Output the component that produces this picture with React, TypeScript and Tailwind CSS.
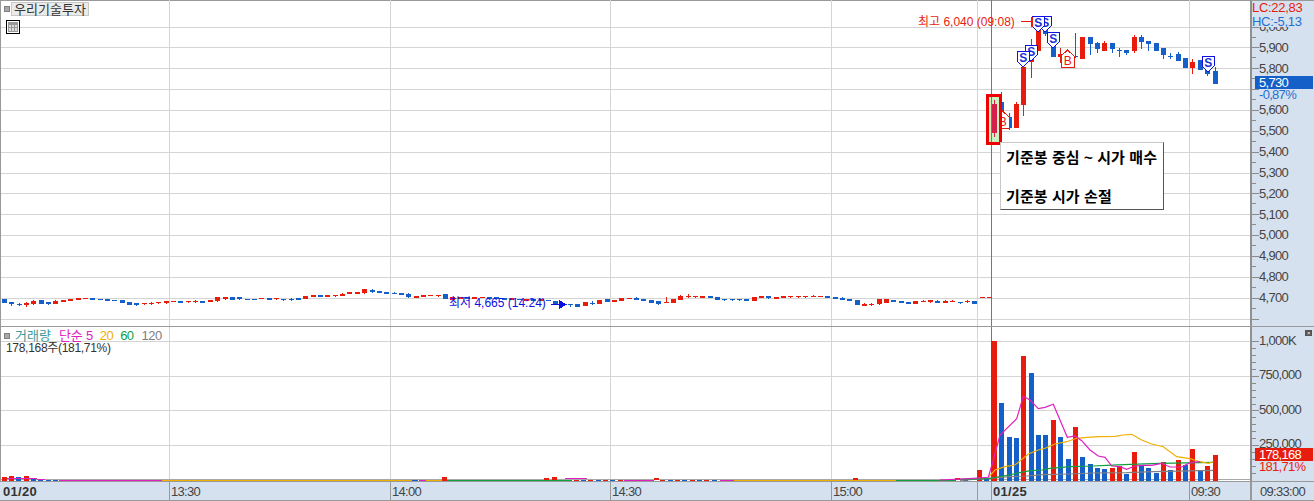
import React from "react";

type C = [string, number, number, number?, number?];
const R = "#e81c0c";
const B = "#1560c8";

const left: C[] = [
  ["b",299,303],["b",302,304,302,306],["b",304,305,303,306],["r",303,305,302,307],["r",301,304,300,305],["b",300,304],["b",302,304,302,305],["r",301,304,300,304],
  ["r",300,302],["r",299,301],["r",298,300],["r",298,299],["b",298,300],["b",299,300],["b",299,301],["b",300,301],
  ["b",300,303],["b",302,305],["b",303,305,303,306],["r",303,304,303,305],["r",303,304,302,305],["r",302,303,302,304],["r",301,303,301,304],["r",301,302],
  ["b",301,303],["r",301,302,301,303],["r",301,302,300,303],["b",301,303],["r",300,302],["r",297,301,297,302],["r",297,299,297,300],["b",297,300],
  ["b",297,299,297,300],["b",299,300],["b",299,300],["r",298,299],["b",298,300],["r",298,299,298,300],["b",299,300,299,301],["b",299,300,298,301],
  ["b",298,300],["r",296,299],["r",295,297],["b",295,297],["r",295,297],
  ["r",295,296,295,297],["r",294,296,293,296],["r",292,294],["r",292,294],["r",289,293,289,294],["b",290,292,289,293],["b",291,293],["b",292,294],
  ["b",293,294,292,294],["b",293,295],["b",294,297,293,298],["r",296,298],["r",295,297],["r",295,296],["r",295,296,295,297],["b",294,299],
  ["r",297,300],["r",297,299],["b",297,299],["r",297,299],["r",297,298],["b",297,299],["b",297,299],["b",298,300],
  ["r",298,300],["b",299,300],["r",299,301],["b",299,301],["r",299,301],["b",300,301],["b",301,304],["b",304,305,303,306],
  ["b",304,305,304,307],["b",304,307],["r",302,306],["b",303,304,301,305],["r",300,304],["b",299,302],["r",300,302],["r",298,301],
  ["r",298,299],["b",298,300,297,300],["b",299,301],["b",300,303],["b",301,304,301,305],
  ["r",302,303,297,303],["r",299,303],["r",296,300,295,300],["r",296,297,294,298],["r",296,297,296,298],["r",296,298],["b",296,298],["b",297,300],
  ["b",299,300,299,301],["b",299,300,299,301],["b",299,300,299,301],["b",299,301],["r",297,301],["r",296,298],["b",296,298,296,299],["r",297,299],
  ["r",296,298],["r",296,297,296,298],["r",296,297,296,298],["r",296,297,296,298],["r",296,297,295,297],["r",296,297],["b",296,298],["b",297,299],
  ["b",298,300,297,300],["b",299,301],["b",300,305],["r",304,306,303,306],["r",304,305,303,306],["r",299,304,299,305],["r",299,303],["b",300,302],
  ["b",301,303],["b",302,304],["r",301,304],["r",301,302,300,302],["r",300,302,300,303],["b",301,303,300,303],["r",301,303,300,303],["r",301,302,300,302],
  ["b",302,303,302,304],["r",301,302,300,303],["b",301,304],["r",297,298],["r",297,298],
];

const right: C[] = [
  ["c",104,133,100,137],["b",102,118,92,120],["b",117,128,113,130],["r",104,128,102,128],["r",67,105,60,116],["r",47,62,39,78],["r",30,51,22,51],["b",16,34,16,36],
  ["b",45,57,32,57],["r",54,57,48,63],["r",58,62,58,66],["b",56,57,33,58],["r",37,59],["b",37,44,37,55],["b",43,49,42,53],["r",43,51,41,51],
  ["b",43,49,43,53],["b",50,51,48,57],["b",50,53,50,55],["r",37,51,35,53],["b",37,42,35,49],["b",41,44,41,51],["b",43,51],["b",48,55,48,59],
  ["b",56,57,53,59],["b",54,61,52,61],["b",58,68],["r",62,68,59,74],["b",60,70],["b",66,74,66,76],["b",71,84,67,84],
];

const vol: [string, number][] = [
  ["r",341],["b",403],["b",437],["b",438],["r",356],["b",373],["b",435],["b",435],["r",420],["b",437],["b",459],["r",427],["b",457],["b",464],["b",468],["b",469],
  ["r",468],["r",466],["b",474],["r",452],["b",465],["b",468],["b",473],["r",462],["b",470],["r",460],["b",465],["r",449],["b",470],["r",466],["r",455],
];

const toLine = (pts: number[][]) => pts.map(([x, y]) => `${(960 + x / 3).toFixed(1)},${(320 + y / 3).toFixed(1)}`).join(" ");
const magenta = toLine([[-60,480],[40,475],[85,472],[100,420],[120,345],[170,296],[190,229],[210,240],[235,266],[255,262],[280,253],[300,300],[322,352],[345,348],[365,362],[390,390],[415,408],[435,412],[455,438],[480,440],[500,448],[525,438],[550,436],[575,436],[605,430],[630,441],[665,441],[690,428],[720,425]]);
const orange = toLine([[85,472],[105,450],[135,440],[165,435],[205,402],[235,390],[255,385],[285,372],[320,365],[350,355],[380,352],[420,350],[465,349],[490,345],[515,343],[545,360],[575,372],[610,380],[650,410],[690,416],[720,425],[745,430],[760,425]]);
const green = toLine([[0,478],[85,476],[130,468],[180,458],[210,452],[245,450],[270,445],[330,440],[400,438],[440,436],[510,433],[600,430],[760,427]]);
const gray = toLine([[0,481],[100,474],[150,470],[200,468],[250,464],[330,462],[400,459],[500,458],[580,455],[760,451]]);

const colX = (i: number) => Math.round(992 + 7.35 * i);
const verticals = [169, 390, 610, 831, 977, 1189];
const prices = ["6,000","5,900","5,800","","5,600","5,500","5,400","5,300","5,200","5,100","5,000","4,900","4,800","4,700"];
const priceY = Array.from({ length: 15 }, (_, i) => Math.round(26.6 + 20.85 * i));

function Candle({ x, c }: { x: number; c: C }) {
  const [k, t, b, wt, wb] = c;
  const fill = k === "r" ? R : k === "b" ? B : "#d81e4a";
  return (
    <g>
      {(wt !== undefined || wb !== undefined) && (
        <rect x={x + 2} y={wt ?? t} width={1} height={(wb ?? b) - (wt ?? t)} fill={fill} />
      )}
      <rect x={x} y={t} width={5} height={b - t} fill={fill} />
    </g>
  );
}

function SMark({ x, y }: { x: number; y: number }) {
  return (
    <g>
      <polygon points={`${x},${y} ${x + 12},${y} ${x + 12},${y + 10} ${x + 6},${y + 16} ${x},${y + 10}`} fill="#fff" stroke="#1010e0" strokeWidth={1} />
      <text x={x + 6} y={y + 11} textAnchor="middle" fontSize={12} fontWeight={700} fill="#1a30d8">S</text>
    </g>
  );
}

function BMark({ x, y }: { x: number; y: number }) {
  return (
    <g>
      <polygon points={`${x + 6.5},${y} ${x + 13},${y + 6} ${x + 13},${y + 17} ${x},${y + 17} ${x},${y + 6}`} fill="#fff" stroke={R} strokeWidth={1} />
      <text x={x + 6.5} y={y + 15} textAnchor="middle" fontSize={12} fontWeight={400} fill={R}>B</text>
    </g>
  );
}

const Sq = () => <span className="block w-[6px] h-[6px] bg-[#a8a8a8] border border-[#808080]" />;

export default function App() {
  return (
    <div className="w-[1314px] h-[501px] flex flex-col bg-[#d6e1ef] overflow-hidden font-['Liberation_Sans','Noto_Sans_CJK_KR',sans-serif] text-[13px] leading-none tracking-[-0.7px] text-[#444]">
      {/* price pane */}
      <div className="flex h-[327px] border-b border-[#999]">
        <div className="relative w-[1250px] bg-white">
          <svg className="block" width={1250} height={326} viewBox="0 0 1250 326" shapeRendering="crispEdges">
            <rect x={0} y={0} width={1250} height={1} fill="#999" />
            <rect x={0} y={0} width={1} height={326} fill="#999" />
            {priceY.map((y) => <rect key={y} x={1} y={y} width={1249} height={1} fill="#d4d4d4" />)}
            {verticals.map((x) => <rect key={x} x={x} y={0} width={1} height={326} fill="#d4d4d4" />)}
            <rect x={991} y={0} width={1} height={326} fill="#c05858" />
            {left.map((c, i) => <Candle key={i} x={Math.round(2 + 7.35 * i)} c={c} />)}
            {right.slice(1).map((c, i) => <Candle key={i} x={colX(i + 1)} c={c} />)}
            <BMark x={996} y={111} />
            <rect x={988} y={96} width={12} height={47} fill="#c8f2c0" />
            <rect x={991} y={96} width={1} height={47} fill="#c05858" />
            <Candle x={992} c={right[0]} />
            <rect x={987.5} y={95.5} width={13} height={48} fill="none" stroke="#f00000" strokeWidth={3} />
            <BMark x={1061} y={50} />
            <SMark x={1039} y={16} />
            <SMark x={1032} y={16} />
            <SMark x={1025} y={45} />
            <SMark x={1017} y={51} />
            <SMark x={1047} y={32} />
            <SMark x={1202} y={56} />
            <rect x={1021} y={21} width={10} height={1} fill={R} />
            <rect x={1031} y={17} width={2} height={10} fill={R} />
            <rect x={551} y={304} width={8} height={1} fill="#0a10e0" />
            <polygon points="559,300 567,304.5 559,309" fill="#0a10e0" />
          </svg>
          <div className="absolute left-[4px] top-[2px] flex items-center gap-[1px]">
            <Sq />
            <span className="h-[14px] w-[78px] flex items-center justify-center bg-[#ebebeb] border border-[#c8c8c8] text-[13px] tracking-normal text-[#333]">우리기술투자</span>
          </div>
          <div className="absolute left-[6px] top-[20px] w-[14px] h-[14px] border border-black bg-white p-[1px]">
            <svg width={10} height={10} viewBox="0 0 10 10" shapeRendering="crispEdges">
              <rect width={10} height={10} fill="#999" />
              <rect x={1} y={3} width={2} height={2} fill="#ddd" /><rect x={4} y={3} width={2} height={2} fill="#ddd" /><rect x={7} y={3} width={2} height={2} fill="#ddd" />
              <rect x={1} y={6} width={2} height={3} fill="#ddd" /><rect x={4} y={6} width={2} height={3} fill="#ddd" /><rect x={7} y={6} width={2} height={3} fill="#ddd" />
            </svg>
          </div>
          <span className="absolute left-[918px] top-[16px] text-[12px] tracking-normal whitespace-nowrap text-[#e81c0c]">최고 6,040 (09:08)</span>
          <span className="absolute left-[449px] top-[297px] text-[12px] tracking-normal whitespace-nowrap text-[#1010e0]">최저 4,665 (14:24)</span>
          <div className="absolute left-[1000px] top-[142px] w-[164px] h-[68px] bg-white border border-t-[#c8c8c8] border-l-[#c8c8c8] border-r-[#555] border-b-[#555] pl-[5px] pt-[5px] flex flex-col gap-[20px] text-[15px] font-bold tracking-[0.1px] text-black">
            <span className="h-[19px] leading-[19px] whitespace-nowrap">기준봉 중심 ~ 시가 매수</span>
            <span className="h-[19px] leading-[19px] whitespace-nowrap">기준봉 시가 손절</span>
          </div>
        </div>
        <div className="relative w-[64px] border-l-2 border-[#909090] border-t border-t-[#999]">
          <svg className="absolute left-0 top-0" width={10} height={325} viewBox="0 1 10 325" shapeRendering="crispEdges">
            {priceY.map((y) => <rect key={y} x={0} y={y} width={7} height={1} fill="#8a8a8a" />)}
            {priceY.map((y) => <rect key={y} x={0} y={y + 10} width={4} height={1} fill="#8a8a8a" />)}
          </svg>
          <div className="flex flex-col pt-[15px] pl-[7px]">
            {prices.map((p, i) => <span key={i} className="h-[20.85px] flex items-center">{p}</span>)}
          </div>
          <div className="absolute left-0 top-0 w-full h-[26px] bg-[#d6e1ef] flex flex-col pl-0 gap-[1px] tracking-[-0.3px]">
            <span className="h-[13px] flex items-center text-[#e81c0c]">LC:22,83</span>
            <span className="h-[12px] flex items-center text-[#1e6fd0]">HC:-5,13</span>
          </div>
          <div className="absolute left-[3px] top-[75px] w-[58px] h-[13px] bg-[#1560c8] text-white pl-[4px] flex items-center">5,730</div>
          <span className="absolute left-[7px] top-[87px] text-[#1e6fd0]">-0,87%</span>
        </div>
      </div>

      {/* volume pane */}
      <div className="flex h-[154px]">
        <div className="relative w-[1250px] bg-white">
          <svg className="block" width={1250} height={154} viewBox="0 327 1250 154" shapeRendering="crispEdges">
            <rect x={0} y={327} width={1} height={154} fill="#999" />
            {[341, 376, 410, 445].map((y) => <rect key={y} x={1} y={y} width={1249} height={1} fill="#d4d4d4" />)}
            {verticals.map((x) => <rect key={x} x={x} y={327} width={1} height={154} fill="#d4d4d4" />)}
            <rect x={991} y={327} width={1} height={154} fill="#c05858" />
            <rect x={1} y={479} width={1249} height={1} fill="#a8a8a8" />
            {/* flat low-volume strip */}
            <rect x={2} y={477} width={5} height={4} fill={R} />
            <rect x={9} y={476} width={5} height={5} fill={R} />
            <rect x={16} y={477} width={5} height={4} fill={B} />
            <rect x={24} y={476} width={5} height={5} fill={R} />
            <rect x={31} y={478} width={5} height={3} fill={B} />
            <rect x={7} y={478} width={30} height={1} fill="#e020c0" />
            <rect x={37} y={479} width={8} height={1} fill="#e020c0" />
            {[38, 46, 53].map((x) => <rect key={x} x={x} y={480} width={5} height={1} fill={B} />)}
            <rect x={59} y={480} width={103} height={1} fill="#e020c0" />
            <rect x={162} y={480} width={250} height={1} fill="#f0b000" />
            <rect x={412} y={480} width={6} height={1} fill={B} />
            <rect x={419} y={480} width={7} height={1} fill="#e020c0" />
            <rect x={426} y={480} width={16} height={1} fill="#f0b000" />
            <rect x={442} y={477} width={5} height={4} fill={R} />
            <rect x={447} y={480} width={125} height={1} fill="#10a040" />
            <rect x={544} y={478} width={5} height={2} fill={R} />
            <rect x={552} y={477} width={5} height={3} fill={R} />
            <rect x={565} y={478} width={22} height={1} fill="#e020c0" />
            {[574, 581, 588, 596, 603, 610, 618].map((x, i) => <rect key={x} x={x} y={480} width={5} height={1} fill={i % 2 ? B : R} />)}
            <rect x={624} y={480} width={30} height={1} fill="#e020c0" />
            <rect x={654} y={478} width={5} height={2} fill={R} />
            {[660, 668, 675, 682, 690, 697, 704, 712].map((x, i) => <rect key={x} x={x} y={480} width={5} height={1} fill={i % 2 ? B : R} />)}
            <rect x={720} y={480} width={14} height={1} fill="#e020c0" />
            <rect x={734} y={480} width={162} height={1} fill="#f0b000" />
            <rect x={853} y={478} width={5} height={2} fill={R} />
            <rect x={896} y={480} width={60} height={1} fill="#10a040" />
            <rect x={955} y={478} width={5} height={2} fill={R} />
            <rect x={963} y={480} width={5} height={1} fill={B} />
            <rect x={970} y={478} width={12} height={1} fill="#e020c0" />
            <rect x={977} y={470} width={5} height={11} fill={R} />
            <rect x={984} y={478} width={5} height={3} fill={B} />
            {vol.map(([k, t], i) => (
              <rect key={i} x={i === 0 ? 991 : colX(i)} y={t} width={i === 0 ? 6 : 5} height={481 - t} fill={k === "r" ? R : B} />
            ))}
            <g shapeRendering="auto" fill="none">
              <polyline points={gray} stroke="#808080" strokeWidth={1.2} />
              <polyline points={green} stroke="#10a040" strokeWidth={1.2} />
              <polyline points={orange} stroke="#f0b000" strokeWidth={1.2} />
              <polyline points={magenta} stroke="#e020c0" strokeWidth={1.2} />
            </g>
          </svg>
          <div className="absolute left-[4px] top-[2px] flex items-center tracking-[-0.5px]">
            <Sq />
            <span className="ml-[5px] tracking-normal text-[#3a9a9a]">거래량</span>
            <span className="ml-[8px] text-[#e020c0]"><span className="tracking-normal">단순</span> 5</span>
            <span className="ml-[7px] text-[#f0b000]">20</span>
            <span className="ml-[7px] text-[#10a040]">60</span>
            <span className="ml-[8px] text-[#808080]">120</span>
          </div>
          <span className="absolute left-[6px] top-[15px] text-[12px] tracking-[-0.3px] whitespace-nowrap text-[#333] bg-white">178,168주(181,71%)</span>
        </div>
        <div className="relative w-[64px] border-l-2 border-[#909090]">
          <svg className="absolute left-0 top-0" width={10} height={154} viewBox="0 327 10 154" shapeRendering="crispEdges">
            {[341, 376, 410, 445].map((y) => <rect key={y} x={0} y={y} width={7} height={1} fill="#8a8a8a" />)}
            {[348, 355, 362, 369, 383, 390, 397, 404, 417, 424, 431, 438, 452, 459, 466, 473].map((y) => <rect key={y} x={0} y={y} width={4} height={1} fill="#8a8a8a" />)}
          </svg>
          <div className="flex flex-col -mt-[4px] pl-[7px]">
            {["1,000K", "750,000", "500,000", "250,000"].map((t) => <span key={t} className="h-[34.5px] flex items-center">{t}</span>)}
          </div>
          <div className="absolute right-[2px] top-[3px] w-[7px] h-[6px] bg-[#555] flex items-center justify-center text-[6px] leading-none text-white">×</div>
          <div className="absolute left-[3px] top-[121px] w-[58px] h-[13px] bg-[#e81c0c] text-white pl-[4px] flex items-center">178,168</div>
          <span className="absolute left-[7px] top-[133px] text-[#e81c0c]">181,71%</span>
        </div>
      </div>

      {/* time axis */}
      <div className="flex h-[20px] border-y border-[#999] items-stretch">
        {[
          ["01/20", 170, true],
          ["13:30", 221, false],
          ["14:00", 220, false],
          ["14:30", 221, false],
          ["15:00", 146, false],
          ["", 14, false],
          ["01/25", 198, true],
          ["09:30", 61, false],
        ].map(([t, w, bold], i) => (
          <div
            key={i}
            style={{ width: w as number }}
            className={`border-r border-[#999] flex items-center whitespace-nowrap ${i === 0 ? "pl-[3px]" : "pl-[1px]"} ${bold ? "font-bold text-[#333] tracking-[0.3px]" : ""}`}
          >
            {t as string}
          </div>
        ))}
        <div className="pl-[8px] flex items-center whitespace-nowrap border-l border-[#999]">09:33:00</div>
      </div>
    </div>
  );
}
